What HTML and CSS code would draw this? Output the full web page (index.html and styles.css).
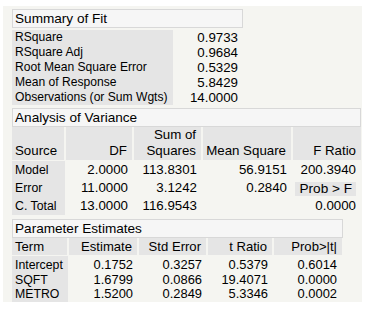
FILE: index.html
```html
<!DOCTYPE html>
<html>
<head>
<meta charset="utf-8">
<link rel="stylesheet" href="styles.css">
</head>
<body>
<div class="panel">
  <section class="report summary">
    <div class="title">Summary of Fit</div>
    <table class="tbl fit">
      <tr><td class="lab">RSquare</td><td class="num">0.9733</td></tr>
      <tr><td class="lab">RSquare Adj</td><td class="num">0.9684</td></tr>
      <tr><td class="lab">Root Mean Square Error</td><td class="num">0.5329</td></tr>
      <tr><td class="lab">Mean of Response</td><td class="num">5.8429</td></tr>
      <tr><td class="lab">Observations (or Sum Wgts)</td><td class="num">14.0000</td></tr>
    </table>
  </section>

  <section class="report anova">
    <div class="title">Analysis of Variance</div>
    <table class="tbl">
      <colgroup><col class="c53"><col class="c68"><col class="c69"><col class="c90"><col class="c69"></colgroup>
      <tr class="head tall">
        <th class="left">Source</th><th>DF</th><th>Sum of<br>Squares</th><th>Mean Square</th><th class="last">F Ratio</th>
      </tr>
      <tr class="row18"><td class="lab">Model</td><td class="num">2.0000</td><td class="num">113.8301</td><td class="num">56.9151</td><td class="num">200.3940</td></tr>
      <tr class="row18"><td class="lab">Error</td><td class="num">11.0000</td><td class="num">3.1242</td><td class="num">0.2840</td><td class="num prob"><div class="probcell">Prob &gt; F</div></td></tr>
      <tr class="row18"><td class="lab">C. Total</td><td class="num">13.0000</td><td class="num">116.9543</td><td class="num"></td><td class="num">0.0000</td></tr>
    </table>
  </section>

  <section class="report params">
    <div class="title">Parameter Estimates</div>
    <table class="tbl">
      <colgroup><col class="c56"><col class="c70"><col class="c69"><col class="c66"><col class="c69"></colgroup>
      <tr class="head">
        <th class="left">Term</th><th>Estimate</th><th>Std Error</th><th>t Ratio</th><th class="last">Prob&gt;|t|</th>
      </tr>
      <tr class="row14 first"><td class="lab">Intercept</td><td class="num">0.1752</td><td class="num">0.3257</td><td class="num">0.5379</td><td class="num">0.6014</td></tr>
      <tr class="row14"><td class="lab">SQFT</td><td class="num">1.6799</td><td class="num">0.0866</td><td class="num">19.4071</td><td class="num">0.0000</td></tr>
      <tr class="row14 lastrow"><td class="lab">METRO</td><td class="num">1.5200</td><td class="num">0.2849</td><td class="num">5.3346</td><td class="num">0.0002</td></tr>
    </table>
  </section>
</div>
</body>
</html>
```

FILE: styles.css
```css
html, body {
  margin: 0;
  padding: 0;
  background: #ffffff;
}

body {
  font-family: "Liberation Sans", Arial, sans-serif;
  color: #000000;
  padding: 6px 0 0 3px;
}

.panel {
  width: 359px;
  height: 296px;
  box-sizing: border-box;
  background: #f5f5f1;
  padding: 3px 0 0 9px;
  display: flex;
  flex-direction: column;
}

.report {
  display: flex;
  flex-direction: column;
}

.title {
  box-sizing: border-box;
  height: 19px;
  line-height: 17px;
  font-size: 13.6px;
  padding-left: 2px;
  background: #f6f6f6;
  border: 1px solid #d8d8d8;
}

.summary .title { width: 231px; }
.anova { margin-top: 3px; }
.anova .title { width: 349px; }
.params { margin-top: 4px; }
.params .title { width: 331px; }

.tbl {
  border-collapse: collapse;
  border-spacing: 0;
  table-layout: fixed;
}

.tbl td, .tbl th {
  padding: 0 5px 0 3px;
  white-space: nowrap;
}

.lab {
  background: #e5e5e5;
  text-align: left;
  font-size: 12.3px;
}

.num {
  text-align: right;
  font-size: 13px;
}

/* Summary of Fit */
.fit {
  width: 231px;
  margin-top: 2px;
}
.fit .lab { width: 161px; box-sizing: border-box; font-size: 12.1px; }
.fit td { height: 15px; line-height: 15px; }
.fit .num { font-size: 13.3px; }

/* column widths */
.c53 { width: 53px; }
.c68 { width: 68px; }
.c69 { width: 69px; }
.c90 { width: 90px; }
.c56 { width: 56px; }
.c70 { width: 70px; }
.c66 { width: 66px; }

.anova .tbl { width: 349px; }
.params .tbl { width: 330px; }

.head th {
  background: #e5e5e5;
  font-weight: normal;
  font-size: 13.3px;
  text-align: right;
  vertical-align: bottom;
  border-right: 2px solid #f5f5f1;
  border-bottom: 1px solid #f5f5f1;
}
.head th.left { text-align: left; }
.head th.last { border-right: none; }

.tall th {
  height: 32px;
  line-height: 16px;
  padding-bottom: 1px;
}

.params .head th {
  height: 17px;
  line-height: 17px;
  font-size: 13.1px;
}

.row18 td {
  height: 18px;
  line-height: 18px;
}
.row18 .lab { font-size: 12.3px; }
.row18 .num { font-size: 13.3px; }

.prob {
  padding: 0;
  vertical-align: bottom;
}
.probcell {
  background: #e5e5e5;
  height: 14px;
  line-height: 14px;
  margin-bottom: 1px;
  padding-right: 4px;
  font-size: 13.6px;
}

.row14 td {
  height: 14.5px;
  line-height: 14.5px;
}
.row14.first td { padding-top: 2px; }
.row14.lastrow td { padding-bottom: 1px; }
.row14 .lab { font-size: 12.3px; }
.row14 .num { font-size: 12.9px; }
```
